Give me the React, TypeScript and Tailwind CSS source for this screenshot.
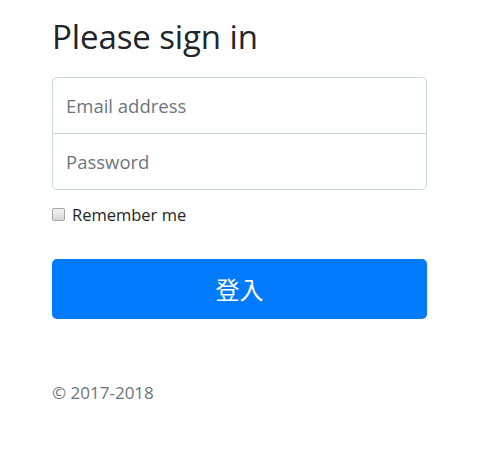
export default function App() {
  return (
    <div className="min-h-[462px] w-[498px] bg-white font-['Open_Sans','Noto_Sans',sans-serif] text-[#212529]">
      <form className="w-[375px] ml-[52px] pt-[16px]" onSubmit={(e) => e.preventDefault()}>
        <h1 className="text-[33px] leading-[42px] font-normal mb-[19px] tracking-[-0.1px]">Please sign in</h1>

        <label htmlFor="inputEmail" className="sr-only">Email address</label>
        <input
          id="inputEmail"
          type="email"
          placeholder="Email address"
          className="block w-full h-[57px] px-[13px] text-[18.5px] leading-[26px] border border-[#ced4da] rounded-t-[5px] placeholder:text-[#6c757d] outline-none"
        />
        <label htmlFor="inputPassword" className="sr-only">Password</label>
        <input
          id="inputPassword"
          type="password"
          placeholder="Password"
          className="block w-full h-[57px] -mt-px px-[13px] text-[18.5px] leading-[26px] border border-[#ced4da] rounded-b-[5px] placeholder:text-[#6c757d] outline-none"
        />

        <div className="mt-[14px] mb-[34px] h-[21px] flex items-center">
          <label className="flex items-center gap-[7px] text-[16.5px] leading-[21px]">
            <input
              type="checkbox"
              value="remember-me"
              className="appearance-none w-[13px] h-[13px] border border-[#a6a6a6] rounded-[2px] bg-gradient-to-b from-[#f4f4f4] to-[#d6d6d6]"
            />
            Remember me
          </label>
        </div>

        <button
          type="submit"
          className="w-full h-[60px] rounded-[5px] bg-[#007bff] text-white text-[24px] font-['Noto_Sans_CJK_TC','Noto_Sans_CJK_SC',sans-serif]"
        >
          登入
        </button>

        <p className="mt-[62px] text-[17px] leading-[24px] text-[#6c757d]">© 2017-2018</p>
      </form>
    </div>
  );
}
